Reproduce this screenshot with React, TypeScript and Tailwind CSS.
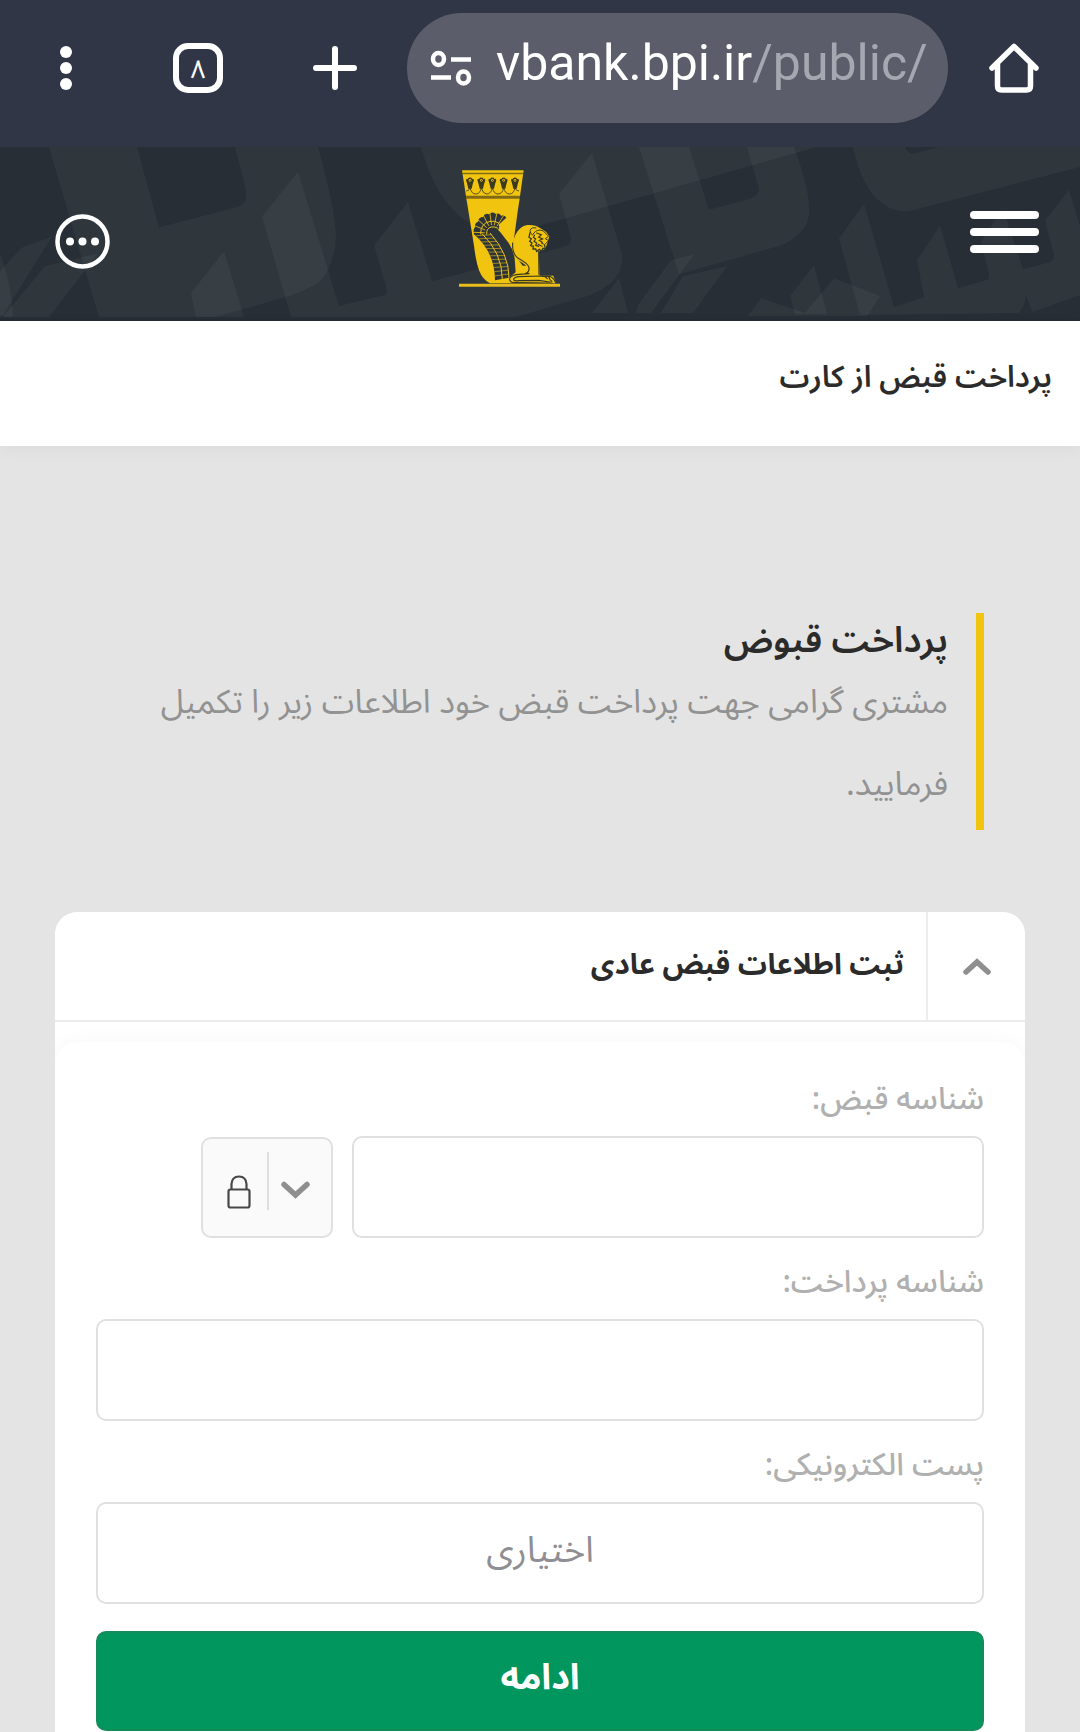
import { useState } from "react"

interface FieldProps {
  id: string;
  label: string;
  type?: string;
  placeholder?: string;
  children?: React.ReactNode;
}

const flowers = [90, 124, 157, 191, 225];

// angles of the gaps between the feathers at the tip of the wing
const tipGaps = [-178, -158, -138, -118, -98, -78, -58];

// steps along the wing where one feather ends and the next begins
const rungs = [0.04, 0.12, 0.2, 0.28, 0.36, 0.44, 0.52, 0.6, 0.68, 0.76, 0.84, 0.92];

const curve = (t: number, a: number, b: number, c: number) => (1 - t) * (1 - t) * a + 2 * t * (1 - t) * b + t * t * c;

function HeaderPattern () {
  return (
    <svg className="absolute inset-0 w-full h-full" viewBox="0 0 1080 173" preserveAspectRatio="none" aria-hidden="true">
      <g fill="#b4d2c8" fillOpacity="0.06">
        <path d="M49 0H137L159 81L238 60Q248 57 246 43L235 0H318Q335 62 336 90Q334 120 320 135Q304 146 282 152L215 171H99Z" />
        <path d="M298 25L262 70L291 171H516L590 149Q625 135 622 108L592 6L559 47L571 92Q571 98 565 100L432 135L408 55L374 99L386 140Q388 147 384 149L339 160Z" />
        <path d="M421 0Q436 55 467 75Q495 90 540 79L817 0Z" />
        <path d="M224 105L191 147L196 171L244 171Z" />
        <path d="M0 125L22 101L52 90L3 169H0Z" />
        <path d="M98 107L45 120L3 171H49Z" />
        <path d="M0 107Q12 140 13 171H0Z" />
        <path d="M639 0L679 128L781 99Q812 85 809 60Q808 38 794 0H747L759 42Q759 50 750 52L709 63L689 0Z" />
        <path d="M694 108L671 114L638 159L636 167H651Z" />
        <path d="M727 120L683 130L661 167H693Z" />
        <path d="M619 132L592 167H628Z" />
        <path d="M853 0Q867 65 908 65L1080 20V0H939L912 7Q906 5 905 0Z" />
        <path d="M864 57L839 92L860 169L1018 167Q1024 163 1026 149L1032 166L1080 149V80L1069 43L1045 74L1054 109Q1054 114 1050 116L1023 123L1003 62L981 95L989 127Q990 133 986 134L958 142L940 79L917 114L924 151L894 161Z" />
        <path d="M814 119L790 150L795 168H827Z" />
        <path d="M834 132L880 150L867 170H748L761 152L805 167Z" />
      </g>
    </svg>
  )
}

function Logo () {
  return (
    <svg className="w-[101px] h-[117px]" viewBox="57 43 303 351" aria-hidden="true">
      <path fill="#f1c40f" d="M66 44H251L240 122L232 175L222 250L219 290L248 330H268V352L230 362L206 383H150Q128 372 118 346Q108 320 102 270L78 122Z" />
      <path fill="#5c4d14" d="M67 51H250V56H67ZM78 120H240V129H79Z" opacity=".75" />

      {/* lotus frieze */}
      {flowers.map((x) => (
        <g key={x} fill="#3b3a1e">
          <path d={`M${x - 12} 73Q${x - 9} 66 ${x - 7} 71Q${x - 4} 63 ${x} 66Q${x + 4} 63 ${x + 7} 71Q${x + 9} 66 ${x + 12} 73Q${x + 9} 82 ${x + 7} 90L${x + 5} 99H${x - 5}L${x - 7} 90Q${x - 9} 82 ${x - 12} 73Z`} />
          <circle cx={x} cy="74" r="4" fill="#f1c40f" />
          <circle cx={x} cy="74" r="2" />
        </g>
      ))}
      <path fill="none" stroke="#3b3a1e" strokeWidth="2.5" d="M79 106Q87 106 90 97Q95 115 107 115Q120 115 124 97Q129 115 140 115Q153 115 157 97Q162 115 174 115Q187 115 191 97Q196 115 208 115Q221 115 225 97Q229 106 237 106" />

      {/* wing */}
      <path fill="#2d3439" d="M102 236Q98 222 105 215Q103 202 114 198Q116 184 129 184Q135 171 147 176Q157 166 167 175Q178 170 183 180Q194 177 199 186L176 207Q180 216 174 223L180 228L206 262Q225 290 225 322L227 350L207 366L165 374Q165 290 102 236Z" />
      <g stroke="#f1c40f" fill="none">
        {tipGaps.map((a) => (
          <path key={a} strokeWidth="2.5" d={`M${158 + 24 * Math.cos(a * Math.PI / 180)} ${232 + 24 * Math.sin(a * Math.PI / 180)}L${158 + 60 * Math.cos(a * Math.PI / 180)} ${232 + 60 * Math.sin(a * Math.PI / 180)}`} />
        ))}
        <path strokeWidth="3" d="M122 236Q121 203 150 197Q164 194 178 203M140 236Q139 217 154 214Q164 212 174 218" />
        <path strokeWidth="3" d="M150 232Q207 295 207 366" />
        <path strokeWidth="3" d="M126 234Q187 292 187 372" />
        {rungs.map((t) => (
          <path key={t} strokeWidth="1.7" d={`M${curve(t, 102, 165, 165)} ${curve(t, 236, 290, 374)}L${curve(t, 150, 207, 207)} ${curve(t, 232, 295, 366)}`} />
        ))}
      </g>

      {/* lion */}
      <path fill="#f1c40f" d="M219 290Q217 258 226 238Q238 212 262 208Q285 206 300 217L318 228L328 242L322 262L316 280L296 288L299 360H340L348 383H206Q206 360 228 356L267 352Q268 334 248 322Q226 310 219 290Z" />
      <g fill="none" stroke="#3b3a1e" strokeWidth="3.5" strokeLinecap="round">
        <path d="M218 262Q216 292 232 306Q266 324 267 336Q268 350 256 354M267 354L228 357Q207 362 209 372Q211 382 228 381L336 382" />
        <path d="M306 361L236 363Q219 366 221 372Q223 377 236 375L296 374L330 379M316 364L322 369M326 363L330 372L336 378M296 287L297 356M306 362H328Q340 364 347 381" />
        <path d="M288 217Q274 213 270 225Q270 233 278 238Q284 224 300 223Q312 224 316 232L326 242L316 249L326 255L314 267L304 262" strokeWidth="3" />
        <path d="M270 231L267 245L274 250L269 257L276 262L272 270L280 272L279 280L287 280L290 287L298 281L304 286L309 278L316 280L314 269" strokeWidth="4" />
        <path d="M284 238L280 245L287 250L282 257L290 262L287 269L296 272M290 232L304 237L296 244L308 250L298 254L307 260M294 266L306 272" strokeWidth="3.5" />
      </g>
      <path fill="#e8bd1b" d="M57 384H360V393H57Z" />
    </svg>
  )
}

function BrowserBar () {
  return (
    <div dir="ltr" className="flex items-center w-full bg-[#313646] pl-[60px] pr-[41px] pt-[13px] pb-6 text-white">
      <button type="button" aria-label="منو" className="flex flex-col gap-1">
        <span className="bg-white rounded-full size-3" />
        <span className="bg-white rounded-full size-3" />
        <span className="bg-white rounded-full size-3" />
      </button>

      <button type="button" className="flex items-center justify-center ml-[101px] pt-1 size-[50px] border-6 border-white rounded-[15px] font-['Noto_Sans_Arabic','DejaVu_Sans',sans-serif] text-[26px] leading-7">۸</button>

      <button type="button" aria-label="برگه جدید" className="ml-[90px]">
        <svg className="size-11" viewBox="0 0 44 44" fill="none" stroke="currentColor" strokeWidth="6" strokeLinecap="round">
          <path d="M22 3V41M3 22H41" />
        </svg>
      </button>

      <div className="flex items-center flex-1 h-[110px] ml-[50px] pl-[23px] rounded-full bg-[#5b5e6a]">
        <svg className="w-[42px] h-9 shrink-0" viewBox="0 0 42 36" fill="none" stroke="currentColor" strokeWidth="4.5" aria-hidden="true">
          <ellipse cx="8.500" cy="9" rx="5.500" ry="6" />
          <path d="M21 9.500H41M1 27.500H21" />
          <ellipse cx="33.500" cy="27.500" rx="5.500" ry="6" />
        </svg>
        <span className="ml-6 pb-2.5 font-[Roboto,sans-serif] text-[50px] leading-14 whitespace-nowrap">vbank.bpi.ir<span className="text-[#a6a8b1]">/public/</span></span>
      </div>

      <a href="#" aria-label="خانه" className="ml-[41px]">
        <svg className="size-[50px]" viewBox="0 0 50 50" fill="none" stroke="currentColor" strokeWidth="5.500" strokeLinecap="round" strokeLinejoin="round">
          <path d="M3 25L25 3.500L47 25M8.500 21V43Q8.500 47 12.500 47H37.500Q41.500 47 41.500 43V21" />
        </svg>
      </a>
    </div>
  )
}

function Field ({ id, label, type = "text", placeholder, children }: FieldProps) {
  return (
    <div className="flex flex-col w-full">
      <label htmlFor={id} className="pt-2.5 pb-0.5 text-[31px] leading-[69px] font-medium text-[#b0b0b0]">{label}</label>
      <div className="flex items-center gap-[19px]">
        <input id={id} type={type} placeholder={placeholder} className="flex-1 min-w-0 h-[102px] pb-1 text-center text-[36px] bg-white border-2 border-[#e0e0e0] rounded-[10px] placeholder:text-[#8e8e93]" />
        {children}
      </div>
    </div>
  )
}

export default function App () {

  const [open, setOpen] = useState(true);

  return (
    <div dir="rtl" className="flex flex-col w-full min-h-screen bg-[#e4e4e4] font-['Noto_Sans_Arabic','DejaVu_Sans',sans-serif] text-[#2b2b2b]">
      <BrowserBar />

      <header className="relative flex items-start justify-between h-[174px] bg-[#272e35] pt-[23px] pr-[41px] pl-[55px] border-b-2 border-[#272c34]">
        <HeaderPattern />
        <button type="button" aria-label="فهرست" className="relative flex flex-col gap-[9px] pt-[41px]">
          <span className="w-[69px] h-2 bg-white rounded-full" />
          <span className="w-[69px] h-2 bg-white rounded-full" />
          <span className="w-[69px] h-2 bg-white rounded-full" />
        </button>
        <div className="relative pr-[61px]">
          <Logo />
        </div>
        <button type="button" aria-label="بیشتر" className="relative pt-11 text-white">
          <svg className="size-[55px]" viewBox="0 0 55 55" fill="currentColor">
            <circle cx="27.500" cy="27.500" r="25" fill="none" stroke="currentColor" strokeWidth="4.500" />
            <circle cx="15" cy="27.500" r="4" />
            <circle cx="27.500" cy="27.500" r="4" />
            <circle cx="40" cy="27.500" r="4" />
          </svg>
        </button>
      </header>

      <div className="relative h-[125px] px-7 pt-[27px] bg-white shadow-[0_4px_16px_rgba(0,0,0,0.04)]">
        <h1 className="text-[30px] leading-[60px] font-semibold">پرداخت قبض از کارت</h1>
      </div>

      <main className="flex flex-col flex-1 px-[55px] pt-[167px]">
        <section className="mx-[41px] pr-7 pb-1 border-r-8 border-[#f1c40f]">
          <h2 className="pt-2 text-[36px] leading-[41px] font-semibold">پرداخت قبوض</h2>
          <p className="text-[33px] leading-[82px] text-[#929292]">مشتری گرامی جهت پرداخت قبض خود اطلاعات زیر را تکمیل فرمایید.</p>
        </section>

        <section className="flex flex-col flex-1 mt-[82px] overflow-hidden bg-white rounded-t-[22px]">
          <div className="flex items-stretch h-[110px] border-b-2 border-[#ececec]">
            <button type="button" aria-expanded={open} aria-controls="bill-form" aria-label="باز و بسته کردن" onClick={() => setOpen(!open)} className="flex items-center justify-center w-[99px] border-l-2 border-[#ececec] text-[#8f8f8f]">
              <svg className="w-7 h-[17px]" viewBox="0 0 28 17" fill="none" stroke="currentColor" strokeWidth="5.500" strokeLinecap="round" strokeLinejoin="miter">
                <path d="M3 14L14 4L25 14" />
              </svg>
            </button>
            <h3 className="pr-[22px] text-[29px] leading-[106px] font-bold">ثبت اطلاعات قبض عادی</h3>
          </div>

          {
            open &&
            <form id="bill-form" className="flex flex-col flex-1 mt-5 px-[41px] pt-[13px] bg-white rounded-t-[22px] shadow-[0_0_20px_rgba(0,0,0,0.04)]" onSubmit={(e) => e.preventDefault()}>
              <Field id="bill-id" label="شناسه قبض:">
                <button type="button" aria-label="شناسه‌های ذخیره شده" className="flex items-center ml-[105px] w-[132px] h-[101px] bg-[#fafafa] border-2 border-[#e0e0e0] rounded-[10px] pr-[21px] gap-3 text-[#8f8f8f]">
                  <svg className="w-[29px] h-[18px] mt-1.5" viewBox="0 0 29 18" fill="none" stroke="currentColor" strokeWidth="5.500" strokeLinecap="round">
                    <path d="M3 3.500L14.500 14L26 3.500" />
                  </svg>
                  <span className="w-0.5 h-[58px] mb-3 bg-[#dedede]" />
                  <svg className="w-6 h-[34px] mt-2.5 mr-1" viewBox="0 0 24 34" fill="none" stroke="#484848" strokeWidth="2.2">
                    <rect x="1.500" y="14.500" width="21" height="18" rx="2" />
                    <path d="M4.500 14V9Q5 1.500 12 1.500Q19 1.500 19.500 9V14" />
                  </svg>
                </button>
              </Field>
              <Field id="payment-id" label="شناسه پرداخت:" />
              <Field id="email" label="پست الکترونیکی:" type="email" placeholder="اختیاری" />

              <button type="submit" className="w-full h-[100px] mt-[27px] pb-1.5 text-[36px] font-bold text-white bg-[#00965e] border-2 border-[#158a5a] rounded-[10px]">ادامه</button>
            </form>
          }
        </section>
      </main>
    </div>
  )
}
